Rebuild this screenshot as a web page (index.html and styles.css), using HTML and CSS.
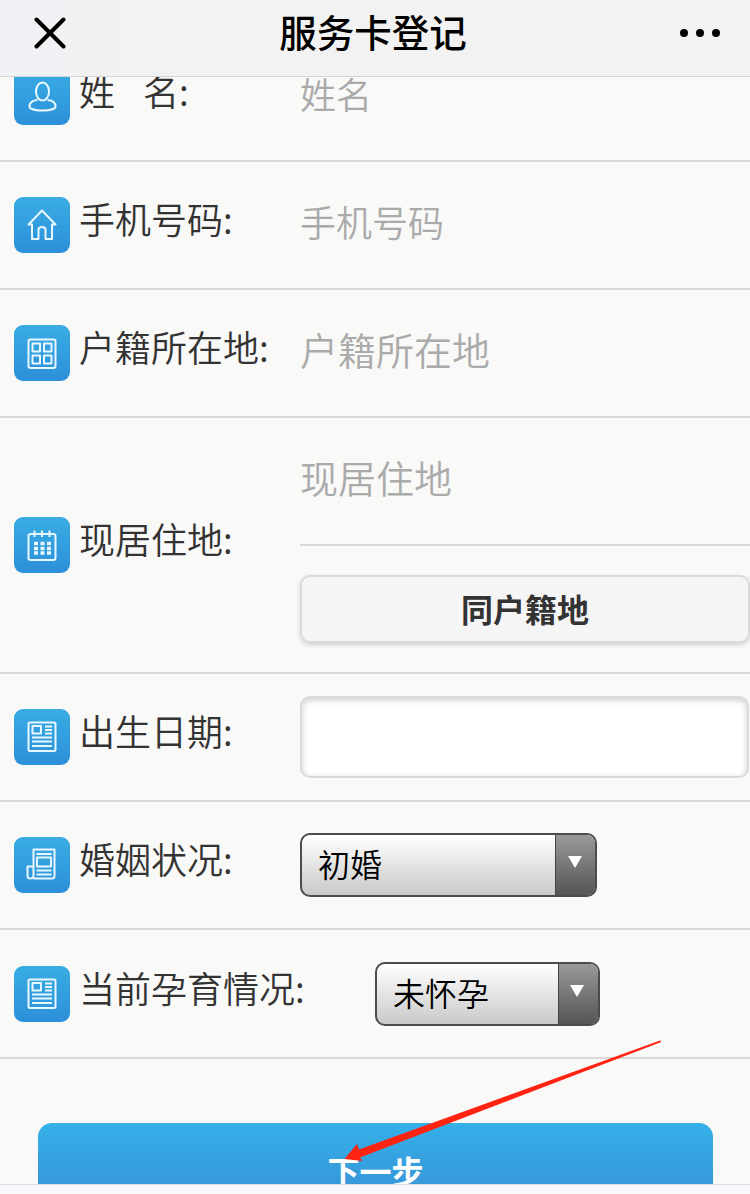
FILE: index.html
```html
<!DOCTYPE html>
<html lang="zh-CN">
<head>
<meta charset="utf-8">
<title>服务卡登记</title>
<link rel="stylesheet" href="styles.css">
</head>
<body>
<header class="bar">
  <svg class="close" viewBox="0 0 32 32"><path d="M2.500 2.500 29.500 29.500M29.500 2.500 2.500 29.500"/></svg>
  <h1 class="title">服务卡登记</h1>
  <svg class="more" viewBox="0 0 40 8"><circle cx="4" cy="4" r="4"/><circle cx="20" cy="4" r="4"/><circle cx="36" cy="4" r="4"/></svg>
</header>
<main class="view">
  <div class="form">
    <div class="row">
      <div class="name"><span class="icon"><svg viewBox="0 0 56 56"><ellipse cx="28.500" cy="22.500" rx="6.500" ry="9"/><path d="M23.500 31C18 31.500 15.500 34 15.500 37.500 15.500 39.500 20 41.500 28.500 41.500S41.500 39.500 41.500 37.500C41.500 34 39 31.500 33.500 31"/></svg></span><span class="label label-spaced"><span>姓</span><span>名:</span></span></div>
      <div class="field"><span class="hint">姓名</span></div>
    </div>
    <div class="row">
      <div class="name"><span class="icon"><svg viewBox="0 0 56 56"><path d="M18 27.500H14.500L28 13.500 41.500 27.500H38V42H31.500V32.500Q31.500 30 28 30T24.500 32.500V42H18Z"/></svg></span><span class="label">手机号码:</span></div>
      <div class="field"><span class="hint">手机号码</span></div>
    </div>
    <div class="row">
      <div class="name"><span class="icon"><svg viewBox="0 0 56 56"><rect x="14.500" y="14.500" width="27" height="28.500" rx="2"/><rect x="18.500" y="18.500" width="7.500" height="8"/><rect x="30" y="18.500" width="7.500" height="8"/><rect x="18.500" y="30.500" width="7.500" height="8"/><rect x="30" y="30.500" width="7.500" height="8"/></svg></span><span class="label">户籍所在地:</span></div>
      <div class="field"><span class="hint hint-lg">户籍所在地</span></div>
    </div>
    <div class="row row-tall">
      <div class="name"><span class="icon"><svg viewBox="0 0 56 56"><rect x="14.500" y="17" width="27" height="26" rx="2"/><path d="M20.500 13.500V20M28 13.500V20M35.500 13.500V20"/><path class="dots" d="M20 26.500H37M20 31.500H37M20 36H37"/></svg></span><span class="label">现居住地:</span></div>
      <div class="field field-stack">
        <div class="line"><span class="hint hint-lg">现居住地</span></div>
        <button class="same" type="button">同户籍地</button>
      </div>
    </div>
    <div class="row">
      <div class="name"><span class="icon"><svg viewBox="0 0 56 56"><rect x="14.500" y="13.500" width="27" height="28.500" rx="1.500"/><rect x="18.500" y="17" width="8.500" height="7.500"/><path d="M31 17.500H38M31 21H38M31 24.500H38M18 28.500H38M18 32.500H38M18 37H38"/></svg></span><span class="label">出生日期:</span></div>
      <div class="field"><div class="date"></div></div>
    </div>
    <div class="row">
      <div class="name"><span class="icon"><svg viewBox="0 0 56 56"><path d="M19.500 41.500H38Q40.500 41.500 40.500 39V12.500H19.500V39Q19.500 41.500 16.500 41.500 13.500 41.500 13.500 39V29.500H19.500"/><path d="M22.500 17H37.500M22.500 33.500H37.500M22.500 37.500H37.500"/><rect x="23" y="20.500" width="14" height="9"/></svg></span><span class="label">婚姻状况:</span></div>
      <div class="field"><div class="select"><span class="value">初婚</span><span class="caret"><svg viewBox="0 0 14 12"><path d="M0 0H14L7 12Z"/></svg></span></div></div>
    </div>
    <div class="row row-last">
      <div class="name"><span class="icon"><svg viewBox="0 0 56 56"><rect x="14.500" y="13.500" width="27" height="28.500" rx="1.500"/><rect x="18.500" y="17" width="8.500" height="7.500"/><path d="M31 17.500H38M31 21H38M31 24.500H38M18 28.500H38M18 32.500H38M18 37H38"/></svg></span><span class="label">当前孕育情况:</span></div>
      <div class="field field-indent"><div class="select select-short"><span class="value">未怀孕</span><span class="caret"><svg viewBox="0 0 14 12"><path d="M0 0H14L7 12Z"/></svg></span></div></div>
    </div>
    <button class="next" type="button">下一步</button>
  </div>
</main>
<svg class="pointer" viewBox="0 0 322 124"><path d="M4.500 119 17 104 19 109.500 320 .5Q322 1 320 2.500L20 117.500 22.500 121Z"/></svg>
</body>
</html>
```
FILE: styles.css
```css
* { box-sizing: border-box; }

body {
  margin: 0;
  width: 750px;
  height: 1194px;
  overflow: hidden;
  position: relative;
  background: #f9f9fb;
  color: #333;
  font-family: "Noto Sans CJK SC", sans-serif;
}

.bar {
  display: grid;
  grid-template-columns: 112px 1fr 120px;
  align-items: center;
  height: 77px;
  padding: 0 30px 10px 34px;
  background: linear-gradient(90deg, #f0f1f4, #f2f2f2 40%);
  border-bottom: 1px solid #d4d4d4;
}

.close {
  width: 32px;
  height: 32px;
  fill: none;
  stroke: #000;
  stroke-width: 4;
  stroke-linecap: round;
}

.title {
  margin: 0;
  padding-bottom: 4px;
  color: #000;
  font-size: 37.5px;
  font-weight: 500;
  line-height: 54px;
  text-align: center;
}

.more {
  width: 40px;
  height: 8px;
  justify-self: end;
}

.view {
  height: 1108px;
  overflow: hidden;
  background: #f9f9f8;
  border-bottom: 1px solid #dcdfe6;
}

.form { margin-top: -43px; }

.row {
  display: flex;
  height: 128px;
  border-bottom: 2px solid #d9d9d9;
}

.row-tall { height: 256px; }
.row-last { height: 129px; }

.name {
  display: flex;
  align-items: center;
  gap: 9px;
  width: 300px;
  padding-left: 14px;
}

.icon {
  width: 56px;
  height: 56px;
  border-radius: 9px;
  background: linear-gradient(#39ade3, #2c8fda);
}

.icon svg {
  display: block;
  width: 56px;
  height: 56px;
  fill: none;
  stroke: #e8f7ff;
  stroke-width: 2;
  stroke-linejoin: round;
}

.icon .dots {
  stroke-width: 3.4;
  stroke-dasharray: 4 2.5;
}

.label {
  padding-bottom: 14px;
  font-size: 36px;
  font-weight: 350;
  line-height: 52px;
  white-space: nowrap;
}

.label-spaced {
  display: flex;
  gap: 28px;
}

.field {
  display: flex;
  flex: 1;
  align-items: center;
  padding-right: 1px;
}

.field-stack {
  flex-direction: column;
  align-items: stretch;
  padding-right: 0;
}

.field-indent { padding-left: 75px; }

.hint {
  padding-bottom: 8px;
  color: #aaa;
  font-size: 36px;
  font-weight: 350;
  line-height: 52px;
}

.hint-lg { font-size: 38px; }

.line {
  display: flex;
  align-items: center;
  height: 128px;
  border-bottom: 2px solid #d9d9d9;
}

.same {
  height: 68px;
  margin-top: 29px;
  padding: 0 0 2px;
  border: 2px solid #dadada;
  border-radius: 10px;
  background: #f5f5f5;
  box-shadow: 0 2px 5px rgba(0, 0, 0, .16);
  color: #333;
  font: bold 32px/48px "Noto Sans CJK SC", sans-serif;
}

.date {
  flex: 1;
  height: 82px;
  border: 2px solid #dadada;
  border-radius: 10px;
  background: #fff;
  box-shadow: inset 0 2px 6px rgba(0, 0, 0, .2);
}

.select {
  display: flex;
  width: 297px;
  height: 64px;
  overflow: hidden;
  border: 2px solid #4c4c4c;
  border-radius: 10px;
  background: linear-gradient(#fff, #c9c9c9);
}

.select-short { width: 225px; }

.value {
  flex: 1;
  padding-left: 16px;
  color: #000;
  font-size: 32px;
  font-weight: 350;
  line-height: 56px;
}

.caret {
  display: flex;
  justify-content: center;
  width: 40px;
  padding: 21px 1px 0 0;
  border-left: 1px solid #444;
  background: linear-gradient(#999, #555);
}

.select-short .caret { padding-right: 3px; }

.caret svg {
  width: 14px;
  height: 12px;
  fill: #fff;
}

.next {
  display: block;
  width: 675px;
  height: 98px;
  margin: 64px 0 0 38px;
  padding: 0 0 4px;
  border: 0;
  border-radius: 14px;
  background: linear-gradient(#35b0e8, #3799da 60px, #2c8fd8);
  color: #fff;
  font: bold 32px/94px "Noto Sans CJK SC", sans-serif;
}

/* Hint arrow lying over the form and the submit button */
.pointer {
  position: absolute;
  left: 340px;
  top: 1040px;
  width: 322px;
  height: 124px;
  fill: #ff2312;
}
```
